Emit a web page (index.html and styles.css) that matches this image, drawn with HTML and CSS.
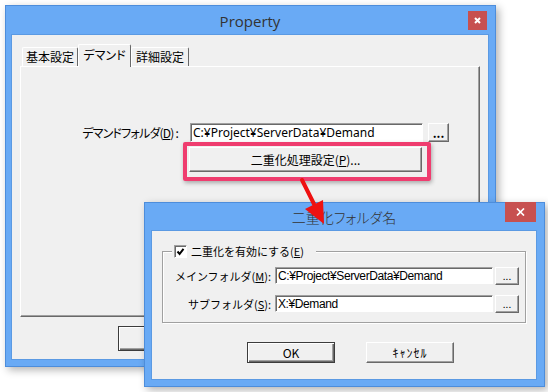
FILE: index.html
```html
<!DOCTYPE html>
<html lang="ja">
<head>
    <meta charset="UTF-8">
    <title>Property</title>
    <link rel="stylesheet" href="styles.css">
</head>
<body>
    <div class="win prop">
        <div class="titlebar">
            <span class="caption">Property</span>
            <span class="close">
                <svg width="7" height="7" viewBox="0 0 7 7"><path d="M1 1L6 6M6 1L1 6" stroke="#fff" stroke-width="2"/></svg>
            </span>
        </div>
        <div class="client">
            <div class="tabs">
                <span class="tab t1">基本設定</span>
                <span class="tab t2">デマンド</span>
                <span class="tab t3">詳細設定</span>
            </div>
            <div class="panel">
                <div class="field">
                    <label class="lbl">デマンドフォルダ(<u>D</u>) :</label>
                    <input class="txt" type="text" value="C:¥Project¥ServerData¥Demand" readonly>
                    <button class="btn dots">...</button>
                </div>
                <button class="btn dup-btn">二重化処理設定(<u>P</u>)...</button>
            </div>
            <div class="footer">
                <button class="btn btn-def">OK</button>
                <button class="btn">キャンセル</button>
            </div>
        </div>
    </div>

    <div class="mark"></div>

    <div class="win dup">
        <div class="titlebar">
            <span class="caption">二重化フォルダ名</span>
            <span class="close">
                <svg width="9" height="8" viewBox="0 0 9 8"><path d="M1 0.5L8 7.5M8 0.5L1 7.5" stroke="#fff" stroke-width="1.7"/></svg>
            </span>
        </div>
        <div class="client">
            <fieldset class="group">
                <legend>
                    <span class="check">
                        <svg width="9" height="9" viewBox="0 0 9 9"><path d="M1.5 4.5L3.6 7L7.5 1.8" fill="none" stroke="#000" stroke-width="2"/></svg>
                    </span>
                    二重化を有効にする(<u>E</u>)
                </legend>
                <div class="row">
                    <label class="lbl">メインフォルダ(<u>M</u>):</label>
                    <input class="txt" type="text" value="C:¥Project¥ServerData¥Demand" readonly>
                    <button class="btn dots">...</button>
                </div>
                <div class="row">
                    <label class="lbl">サブフォルダ(<u>S</u>):</label>
                    <input class="txt" type="text" value="X:¥Demand" readonly>
                    <button class="btn dots">...</button>
                </div>
            </fieldset>
            <div class="actions">
                <button class="btn btn-def">OK</button>
                <button class="btn cancel">ｷｬﾝｾﾙ</button>
            </div>
        </div>
    </div>

    <svg class="arrow" width="36" height="52" viewBox="0 0 36 52">
        <path d="M7 4L19 28" stroke="#ee1111" stroke-width="4" stroke-linecap="round"/>
        <polygon points="29,48 10,33 28,24" fill="#ee1111"/>
    </svg>
</body>
</html>
```

FILE: styles.css
```css
body {
    margin: 0;
    width: 548px;
    height: 392px;
    position: relative;
    overflow: hidden;
    background: #fff;
    font-family: "Noto Sans CJK JP", sans-serif;
    font-size: 12px;
    color: #000;
}

/* windows */
.win {
    position: absolute;
    box-sizing: border-box;
    display: flex;
    flex-direction: column;
    background: #69aaf5;
    border: 1px solid #4d8ddb;
    box-shadow: 3px 3px 8px rgba(0, 0, 0, .3);
}
.prop {
    left: 5px;
    top: 5px;
    width: 491px;
    height: 362px;
    padding: 0 7px 7px 6px;
}
.dup {
    left: 144px;
    top: 202px;
    width: 401px;
    height: 185px;
    padding: 0 8px 7px 7px;
}
.titlebar {
    position: relative;
    flex: none;
    display: flex;
    align-items: center;
    justify-content: center;
    color: #333;
}
.prop .titlebar {
    height: 29px;
    font-family: "Open Sans", sans-serif;
    font-size: 15px;
}
.dup .titlebar {
    height: 28px;
    font-size: 14px;
    font-weight: 300;
    font-feature-settings: "palt";
}
.close {
    position: absolute;
    display: flex;
    align-items: center;
    justify-content: center;
    background: #c75050;
}
.prop .close {
    top: 5px;
    right: 1px;
    width: 19px;
    height: 19px;
}
.dup .close {
    top: -1px;
    right: 0;
    width: 31px;
    height: 20px;
}
.client {
    flex: 1;
    display: flex;
    flex-direction: column;
    background: #f0f0f0;
    box-shadow: 0 0 0 1px #5b9ae3;
}

/* property window */
.prop .client {
    padding: 9px 8px 0;
    font-feature-settings: "palt";
}
.tabs {
    position: relative;
    z-index: 1;
    display: flex;
    align-items: flex-end;
    height: 22px;
    padding-left: 2px;
}
.tab {
    box-sizing: border-box;
    height: 19px;
    line-height: 17px;
    text-align: center;
    border: 1px solid;
    border-color: #fff #696969 #fff #fff;
    border-bottom: 0;
    border-radius: 2px 2px 0 0;
}
.t1 { width: 56px; }
.t2 {
    width: 53px;
    height: 23px;
    line-height: 20px;
    margin-bottom: -1px;
    background: #f0f0f0;
}
.t3 { width: 58px; }
.panel {
    box-sizing: border-box;
    height: 251px;
    padding-top: 56px;
    border: 1px solid;
    border-color: #fff #696969 #696969 #fff;
    box-shadow: inset -1px -1px 0 #a0a0a0;
}
.field, .row {
    display: flex;
    align-items: center;
}
.prop .lbl {
    width: 157px;
    margin-right: 12px;
    text-align: right;
    letter-spacing: -0.8px;
}
.txt {
    box-sizing: border-box;
    margin: 0;
    padding: 0 2px;
    background: #fff;
    border: 1px solid;
    border-color: #a0a0a0 #fff #fff #a0a0a0;
    box-shadow: inset 1px 1px 0 #696969;
    color: #000;
    outline: none;
}
.prop .txt {
    width: 233px;
    height: 19px;
    font-family: "Noto Sans", sans-serif;
    font-size: 12px;
}
.btn {
    box-sizing: border-box;
    margin: 0;
    padding: 0;
    background: #f0f0f0;
    border: 1px solid;
    border-color: #fff #696969 #696969 #fff;
    box-shadow: inset -1px -1px 0 #a0a0a0;
    font: inherit;
    color: #000;
}
.btn-def {
    border-color: #3c3c3c;
    box-shadow: inset 1px 1px 0 #fff, inset -1px -1px 0 #696969, inset -2px -2px 0 #a0a0a0;
}
.prop .dots {
    width: 21px;
    height: 19px;
    margin-left: 5px;
    font-weight: bold;
}
.dup-btn {
    display: block;
    width: 233px;
    height: 25px;
    margin: 5px 0 0 168px;
}
.footer {
    display: flex;
    gap: 8px;
    padding: 9px 0 0 98px;
}
.footer .btn {
    width: 88px;
    height: 25px;
}

/* highlight + arrow */
.mark {
    position: absolute;
    left: 183px;
    top: 142px;
    width: 248px;
    height: 39px;
    box-sizing: border-box;
    border: 4px solid #ef3d6f;
    border-radius: 2px;
    box-shadow: 1px 2px 4px rgba(0, 0, 0, .3);
}
.arrow {
    position: absolute;
    left: 295px;
    top: 176px;
}

/* duplicate folder dialog */
.dup .client {
    padding: 0 10px;
    font-size: 11px;
}
.group {
    margin: 13px 0 0;
    padding: 9px 0 10px;
    min-width: 0;
    border: 1px solid #a0a0a0;
    box-shadow: inset 1px 1px 0 #fff, 1px 1px 0 #fff;
}
.group legend {
    display: flex;
    align-items: center;
    height: 14px;
    margin-left: 9px;
    padding: 0 12px 0 2px;
    background: #f0f0f0;
}
.check {
    box-sizing: border-box;
    width: 13px;
    height: 13px;
    margin-right: 4px;
    display: flex;
    align-items: center;
    justify-content: center;
    background: #fff;
    border: 1px solid;
    border-color: #a0a0a0 #fff #fff #a0a0a0;
    box-shadow: inset 1px 1px 0 #696969;
}
.row {
    height: 17px;
}
.row + .row {
    margin-top: 11px;
}
.dup .lbl {
    width: 108px;
    margin-right: 4px;
    text-align: right;
}
.dup .txt {
    width: 218px;
    height: 17px;
    font-family: "Liberation Sans", sans-serif;
    font-size: 12px;
    letter-spacing: -0.4px;
}
.dup .dots {
    width: 24px;
    height: 18px;
    margin-left: 2px;
    font-size: 10px;
}
.actions {
    display: flex;
    gap: 31px;
    margin-top: 19px;
    padding-left: 85px;
}
.actions .btn {
    width: 88px;
    height: 21px;
    font-size: 12px;
}
.cancel {
    letter-spacing: 1px;
}
```
